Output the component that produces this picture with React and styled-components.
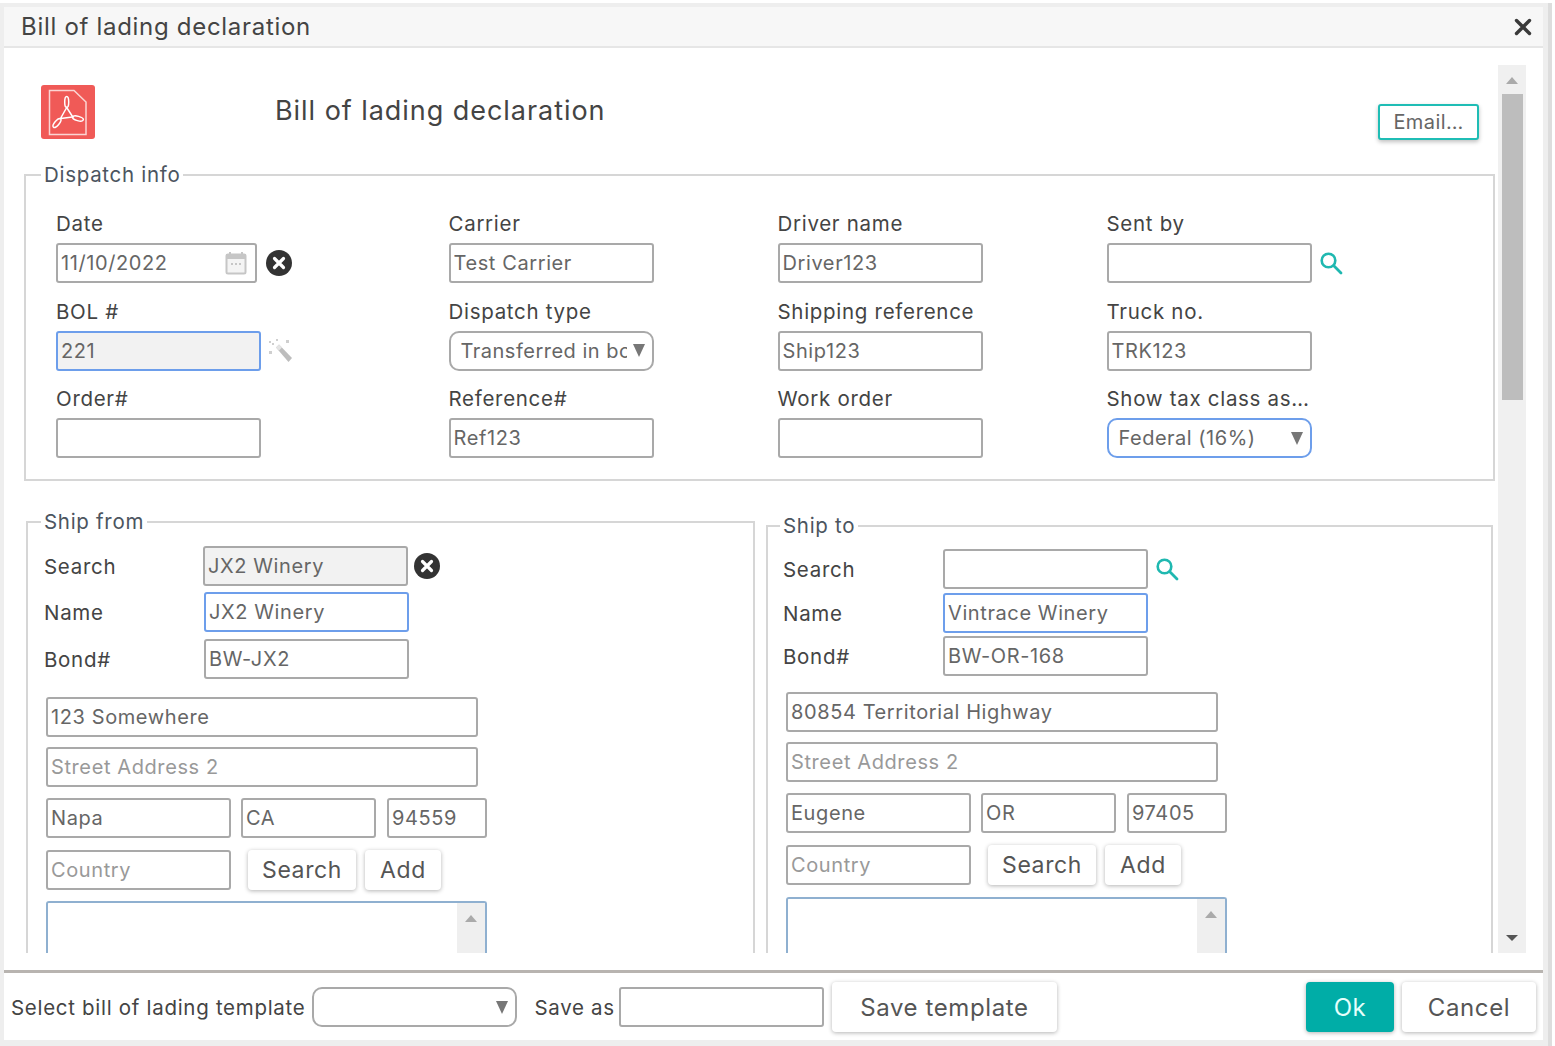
import React from "react";
import styled, { createGlobalStyle } from "styled-components";

const GlobalStyle = createGlobalStyle`
  html, body {
    margin: 0;
    padding: 0;
    background: #fff;
  }
  * {
    box-sizing: border-box;
  }
  body {
    font-family: Inter, "Open Sans", sans-serif;
    color: #444;
  }
`;

const Screen = styled.div`
  display: flex;
  width: 1555px;
  height: 1046px;
  overflow: hidden;
`;

const Dialog = styled.div`
  display: flex;
  flex-direction: column;
  width: 1548px;
  height: 1043px;
  margin-top: 3px;
  padding: 4px 5px 3px 4px;
  background: #eeeeee;
`;

const PageEdge = styled.div`
  width: 4px;
  height: 1043px;
  margin-top: 3px;
  background: #dddddd;
`;

const Header = styled.header`
  display: flex;
  align-items: center;
  justify-content: space-between;
  height: 41px;
  padding: 0 11px 0 17px;
  background: #f7f7f7;
  border-bottom: 2px solid #e6e6e6;
`;

const HeaderTitle = styled.h2`
  margin: 0;
  font-size: 24px;
  font-weight: 400;
  letter-spacing: 0.7px;
  color: #444;
`;

const Body = styled.div`
  display: flex;
  height: 922px;
  padding-bottom: 17px;
  background: #fff;
`;

const Content = styled.div`
  width: 1494px;
  overflow: hidden;
`;

const TitleRow = styled.div`
  position: relative;
  display: flex;
  align-items: flex-start;
  height: 115px;
  padding: 37px 0 0 37px;
`;

const DocTitle = styled.h1`
  margin: 9px 0 0 180px;
  font-size: 27px;
  font-weight: 400;
  letter-spacing: 0.95px;
  color: #444;
`;

const EmailButton = styled.button`
  position: absolute;
  top: 56px;
  right: 19px;
  width: 101px;
  height: 36px;
  padding: 0;
  font: inherit;
  font-size: 20px;
  letter-spacing: 0.4px;
  color: #666;
  background: #fff;
  border: 2px solid #1fbdb5;
  border-radius: 3px;
  box-shadow: 0 2px 4px rgba(0, 0, 0, 0.25);
`;

const Group = styled.fieldset`
  flex: none;
  min-width: 0;
  width: ${(p) => p.$width}px;
  height: ${(p) => (p.$height ? `${p.$height}px` : "auto")};
  margin: ${(p) => p.$margin};
  padding: ${(p) => p.$padding};
  border: 2px solid #d6d6d6;
`;

const Legend = styled.legend`
  margin-left: ${(p) => p.$left}px;
  padding: 0 3px;
  font-size: 20.5px;
  line-height: 24px;
  letter-spacing: 0.7px;
  color: #4c5560;
`;

const DispatchGrid = styled.div`
  display: grid;
  grid-template-columns: 392.5px 329px 329px 1fr;
  grid-auto-rows: 87.5px;
`;

const Cell = styled.div`
  display: flex;
  flex-direction: column;
`;

const FieldLabel = styled.label`
  height: 31px;
  font-size: 20.5px;
  line-height: 24px;
  letter-spacing: 0.7px;
  color: #444;
`;

const InputRow = styled.div`
  display: flex;
  align-items: center;
  gap: ${(p) => p.$gap || 0}px;
`;

const Input = styled.input`
  flex: none;
  display: block;
  width: ${(p) => p.$width || 205}px;
  height: 40px;
  margin-left: ${(p) => p.$left || 0}px;
  padding: 0 3px;
  font: inherit;
  font-size: 20px;
  letter-spacing: 0.6px;
  color: #666;
  background: ${(p) => (p.$readonly ? "#f2f2f2" : "#fff")};
  border: 2px solid ${(p) => (p.$focus ? "#6d9eeb" : "#a9a9a9")};
  border-radius: 3px;
  outline: none;

  &::placeholder {
    color: #999;
    opacity: 1;
  }
`;

const DateBox = styled.div`
  display: flex;
  align-items: center;
  justify-content: space-between;
  width: 201px;
  height: 40px;
  padding: 0 8px 0 3px;
  font-size: 20px;
  letter-spacing: 0.6px;
  color: #666;
  border: 2px solid #a9a9a9;
  border-radius: 3px;
`;

const SelectBox = styled.div`
  display: flex;
  align-items: center;
  width: ${(p) => p.$width}px;
  height: 40px;
  padding: 0 7px 0 10px;
  font-size: 20px;
  letter-spacing: 0.5px;
  color: #666;
  background: #fff;
  border: 2px solid ${(p) => (p.$focus ? "#6d9eeb" : "#a9a9a9")};
  border-radius: 10px;
`;

const SelectText = styled.span`
  flex: 1;
  margin-right: 6px;
  overflow: hidden;
  white-space: nowrap;
`;

const Caret = styled.span`
  flex: none;
  width: 0;
  height: 0;
  border-left: 6px solid transparent;
  border-right: 6px solid transparent;
  border-top: 13px solid #777;
`;

const Panels = styled.div`
  display: flex;
  align-items: flex-start;
  height: 470px;
`;

const ShipRow = styled.div`
  display: flex;
  align-items: center;
  margin-top: ${(p) => p.$top || 0}px;
  margin-left: ${(p) => p.$left || 0}px;
`;

const RowLabel = styled.label`
  flex: none;
  width: ${(p) => p.$width}px;
  font-size: 20.5px;
  letter-spacing: 0.7px;
  color: #444;
`;

const PlainButton = styled.button`
  flex: none;
  width: ${(p) => p.$width}px;
  height: ${(p) => p.$height || 40}px;
  margin-left: ${(p) => p.$left || 0}px;
  padding: 0;
  font: inherit;
  font-size: ${(p) => p.$size || 23}px;
  letter-spacing: 0.6px;
  color: #555;
  background: #fff;
  border: 0;
  border-radius: 4px;
  box-shadow: 0 1px 4px rgba(0, 0, 0, 0.3);
`;

const OkButton = styled(PlainButton)`
  color: #e6fffb;
  background: #00ada7;
`;

const NotesBox = styled.div`
  display: flex;
  justify-content: flex-end;
  width: 441px;
  height: 70px;
  margin: ${(p) => p.$top}px 0 0 ${(p) => p.$left}px;
  border: 2px solid #8fb0d0;
  border-bottom: 0;
  border-radius: 3px 3px 0 0;
`;

const NotesScroll = styled.div`
  display: flex;
  justify-content: center;
  width: 28px;
  padding-top: 12px;
  background: #efefef;
`;

const ArrowUp = styled.span`
  width: 0;
  height: 0;
  border-left: 6px solid transparent;
  border-right: 6px solid transparent;
  border-bottom: 7px solid #aaa;
`;

const ArrowDown = styled.span`
  width: 0;
  height: 0;
  border-left: 6px solid transparent;
  border-right: 6px solid transparent;
  border-top: 6px solid #555;
`;

const ScrollTrack = styled.div`
  display: flex;
  flex-direction: column;
  align-items: center;
  width: 28px;
  margin-top: 17px;
  padding-top: 12px;
  background: #f0f0f0;
`;

const ScrollThumb = styled.div`
  width: 21px;
  height: 306px;
  margin-top: 10px;
  background: #bdbdbd;
`;

const ScrollSpacer = styled.div`
  flex: 1;
`;

const ScrollEnd = styled.div`
  height: 12px;
`;

const Footer = styled.footer`
  display: flex;
  align-items: center;
  height: 70px;
  padding: 1px 7px 0 7px;
  background: #fff;
  border-top: 3px solid #b8b4b0;
`;

const FooterLabel = styled.span`
  flex: none;
  margin-left: ${(p) => p.$left || 0}px;
  margin-right: ${(p) => p.$right || 0}px;
  font-size: 20.5px;
  letter-spacing: 0.7px;
  color: #444;
`;

const FooterGap = styled.div`
  flex: 1;
`;

const Wand = () => (
  <svg width="26" height="26" viewBox="0 0 26 26">
    <path d="M9 9.5 L12 6.5 L25 20 L21.5 24 Z" fill="#bdbdbd" />
    <path d="M9 9.5 L12 6.5 L15 9.6 L12 12.6 Z" fill="#e4e4e4" />
    <g fill="#cfcfcf">
      <path d="M2 3h2v2H2zM5 5h2v2H5zM2 13h3v3H2zM19 2h3v3h-3zM9 1h2v2H9z" />
    </g>
  </svg>
);

const ClearIcon = () => (
  <svg width="26" height="26" viewBox="0 0 26 26">
    <circle cx="13" cy="13" r="13" fill="#333" />
    <path d="M8.5 8.5 L17.5 17.5 M17.5 8.5 L8.5 17.5" stroke="#fff" strokeWidth="3.2" strokeLinecap="round" />
  </svg>
);

const CloseIcon = () => (
  <svg width="18" height="18" viewBox="0 0 18 18">
    <path d="M2.5 2.5 L15.5 15.5 M15.5 2.5 L2.5 15.5" stroke="#3a3a3a" strokeWidth="3.4" strokeLinecap="round" />
  </svg>
);

const FindIcon = () => (
  <svg width="24" height="24" viewBox="0 0 24 24" fill="none" stroke="#1fb8b0">
    <circle cx="9.5" cy="9.5" r="6.8" strokeWidth="2.6" />
    <path d="M14.8 14.8 L22 22" strokeWidth="2.8" strokeLinecap="round" />
  </svg>
);

const CalendarIcon = () => (
  <svg width="22" height="24" viewBox="0 0 22 24">
    <rect x="1.5" y="3.5" width="19" height="19" rx="1.5" fill="#f4f4f4" stroke="#c6c6c6" strokeWidth="2" />
    <rect x="1" y="3" width="20" height="5" fill="#c6c6c6" />
    <path d="M5 1v3M17 1v3" stroke="#c6c6c6" strokeWidth="2" />
    <path d="M6 13h2M10 13h2M14 13h2" stroke="#c6c6c6" strokeWidth="2" />
  </svg>
);

const PdfIcon = () => (
  <svg width="54" height="54" viewBox="0 0 54 54">
    <rect width="54" height="54" rx="3" fill="#f05a57" />
    <path d="M8.5 5.5 H33 L45 17 V49.5 H8.5 Z" fill="none" stroke="#fbd5d3" strokeWidth="1.5" />
    <g fill="none" stroke="#fff" strokeWidth="1.5">
      <ellipse cx="25.7" cy="17" rx="2" ry="5.5" />
      <ellipse cx="16" cy="38" rx="2.2" ry="5.5" transform="rotate(40 16 38)" />
      <ellipse cx="37" cy="33.5" rx="5.5" ry="2.2" transform="rotate(15 37 33.5)" />
      <path d="M25.7 22.5 L19.5 33.5 L31.8 32 Z" />
    </g>
  </svg>
);

const dispatchFields = [
  { label: "Carrier", value: "Test Carrier" },
  { label: "Driver name", value: "Driver123" },
];

const ShipPanel = ({ title, width, margin, data }) => (
  <Group $width={width} $margin={margin} $padding={data.padding}>
    <Legend $left={-3}>{title}</Legend>
    <ShipRow $top={data.top[0]}>
      <RowLabel $width={data.labelWidth}>Search</RowLabel>
      {data.search ? (
        <InputRow $gap={6}>
          <Input $readonly readOnly value={data.search} />
          <ClearIcon />
        </InputRow>
      ) : (
        <InputRow $gap={7}>
          <Input readOnly value="" />
          <FindIcon />
        </InputRow>
      )}
    </ShipRow>
    <ShipRow $top={data.top[1]}>
      <RowLabel $width={data.nameWidth}>Name</RowLabel>
      <Input $focus readOnly value={data.name} />
    </ShipRow>
    <ShipRow $top={data.top[2]}>
      <RowLabel $width={data.nameWidth}>Bond#</RowLabel>
      <Input readOnly value={data.bond} />
    </ShipRow>
    <ShipRow $top={data.top[3]} $left={data.addressLeft}>
      <Input $width={432} readOnly value={data.street} />
    </ShipRow>
    <ShipRow $top={10} $left={data.addressLeft}>
      <Input $width={432} placeholder="Street Address 2" />
    </ShipRow>
    <ShipRow $top={11} $left={data.addressLeft}>
      <Input $width={185} readOnly value={data.city} />
      <Input $width={135} $left={10} readOnly value={data.state} />
      <Input $width={100} $left={11} readOnly value={data.zip} />
    </ShipRow>
    <ShipRow $top={12} $left={data.addressLeft}>
      <Input $width={185} placeholder="Country" />
      <PlainButton $width={108} $left={17}>Search</PlainButton>
      <PlainButton $width={76} $left={9}>Add</PlainButton>
    </ShipRow>
    <NotesBox $top={data.notesTop} $left={data.addressLeft}>
      <NotesScroll>
        <ArrowUp />
      </NotesScroll>
    </NotesBox>
  </Group>
);

const shipFrom = {
  padding: "0 0 0 16px",
  top: [12, 6, 7, 18],
  labelWidth: 159,
  nameWidth: 160,
  addressLeft: 2,
  notesTop: 11,
  search: "JX2 Winery",
  name: "JX2 Winery",
  bond: "BW-JX2",
  street: "123 Somewhere",
  city: "Napa",
  state: "CA",
  zip: "94559",
};

const shipTo = {
  padding: "0 0 0 15px",
  top: [11, 4, 3, 16],
  labelWidth: 160,
  nameWidth: 160,
  addressLeft: 3,
  notesTop: 12,
  name: "Vintrace Winery",
  bond: "BW-OR-168",
  street: "80854 Territorial Highway",
  city: "Eugene",
  state: "OR",
  zip: "97405",
};

const App = () => {
  return (
    <Screen>
      <GlobalStyle />
      <Dialog>
        <Header>
          <HeaderTitle>Bill of lading declaration</HeaderTitle>
          <CloseIcon />
        </Header>
        <Body>
          <Content>
            <TitleRow>
              <PdfIcon />
              <DocTitle>Bill of lading declaration</DocTitle>
              <EmailButton>Email…</EmailButton>
            </TitleRow>
            <Group $width={1471} $height={318} $margin="0 0 0 20px" $padding="25px 0 0 30px">
              <Legend $left={-15}>Dispatch info</Legend>
              <DispatchGrid>
                <Cell>
                  <FieldLabel>Date</FieldLabel>
                  <InputRow $gap={9}>
                    <DateBox>
                      11/10/2022
                      <CalendarIcon />
                    </DateBox>
                    <ClearIcon />
                  </InputRow>
                </Cell>
                {dispatchFields.map((f) => (
                  <Cell key={f.label}>
                    <FieldLabel>{f.label}</FieldLabel>
                    <Input readOnly value={f.value} />
                  </Cell>
                ))}
                <Cell>
                  <FieldLabel>Sent by</FieldLabel>
                  <InputRow $gap={7}>
                    <Input readOnly value="" />
                    <FindIcon />
                  </InputRow>
                </Cell>

                <Cell>
                  <FieldLabel>BOL #</FieldLabel>
                  <InputRow $gap={6}>
                    <Input $focus $readonly readOnly value="221" />
                    <Wand />
                  </InputRow>
                </Cell>
                <Cell>
                  <FieldLabel>Dispatch type</FieldLabel>
                  <SelectBox $width={205}>
                    <SelectText>Transferred in bond</SelectText>
                    <Caret />
                  </SelectBox>
                </Cell>
                <Cell>
                  <FieldLabel>Shipping reference</FieldLabel>
                  <Input readOnly value="Ship123" />
                </Cell>
                <Cell>
                  <FieldLabel>Truck no.</FieldLabel>
                  <Input readOnly value="TRK123" />
                </Cell>

                <Cell>
                  <FieldLabel>Order#</FieldLabel>
                  <Input readOnly value="" />
                </Cell>
                <Cell>
                  <FieldLabel>Reference#</FieldLabel>
                  <Input readOnly value="Ref123" />
                </Cell>
                <Cell>
                  <FieldLabel>Work order</FieldLabel>
                  <Input readOnly value="" />
                </Cell>
                <Cell>
                  <FieldLabel>Show tax class as…</FieldLabel>
                  <SelectBox $width={205} $focus>
                    <SelectText>Federal (16%)</SelectText>
                    <Caret />
                  </SelectBox>
                </Cell>
              </DispatchGrid>
            </Group>
            <Panels>
              <ShipPanel title="Ship from" width={729} margin="29px 0 0 22px" data={shipFrom} />
              <ShipPanel title="Ship to" width={727} margin="33px 0 0 11px" data={shipTo} />
            </Panels>
          </Content>
          <ScrollTrack>
            <ArrowUp />
            <ScrollThumb />
            <ScrollSpacer />
            <ArrowDown />
            <ScrollEnd />
          </ScrollTrack>
        </Body>
        <Footer>
          <FooterLabel $right={7}>Select bill of lading template</FooterLabel>
          <SelectBox $width={205}>
            <SelectText />
            <Caret />
          </SelectBox>
          <FooterLabel $left={17} $right={4}>Save as</FooterLabel>
          <Input $width={205} readOnly value="" />
          <PlainButton $width={225} $height={50} $left={8} $size={24}>Save template</PlainButton>
          <FooterGap />
          <OkButton $width={88} $height={50} $size={24}>Ok</OkButton>
          <PlainButton $width={134} $height={50} $left={8} $size={24}>Cancel</PlainButton>
        </Footer>
      </Dialog>
      <PageEdge />
    </Screen>
  );
};

export default App;
